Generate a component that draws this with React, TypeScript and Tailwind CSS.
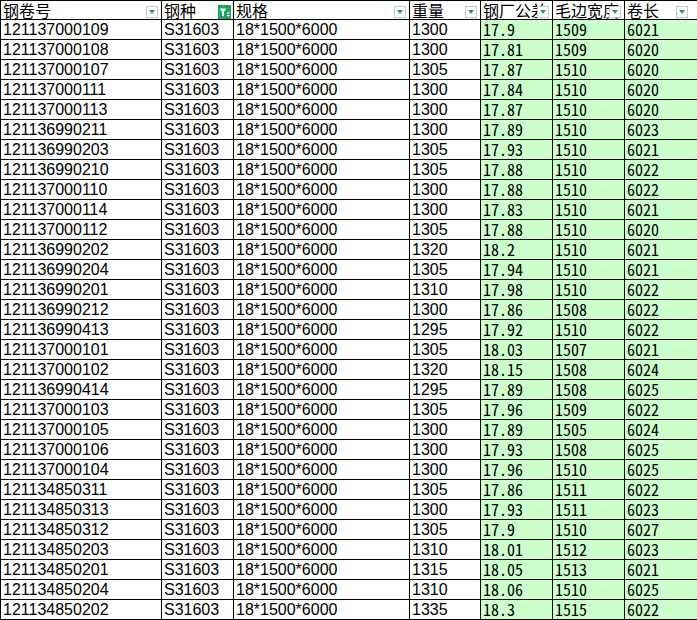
import React from "react";

type Row = [string, string, string, string, string];

const rows: Row[] = [
  ["121137000109", "1300", "17.9", "1509", "6021"],
  ["121137000108", "1300", "17.81", "1509", "6020"],
  ["121137000107", "1305", "17.87", "1510", "6020"],
  ["121137000111", "1300", "17.84", "1510", "6020"],
  ["121137000113", "1300", "17.87", "1510", "6020"],
  ["121136990211", "1300", "17.89", "1510", "6023"],
  ["121136990203", "1305", "17.93", "1510", "6021"],
  ["121136990210", "1305", "17.88", "1510", "6022"],
  ["121137000110", "1300", "17.88", "1510", "6022"],
  ["121137000114", "1300", "17.83", "1510", "6021"],
  ["121137000112", "1305", "17.88", "1510", "6020"],
  ["121136990202", "1320", "18.2", "1510", "6021"],
  ["121136990204", "1305", "17.94", "1510", "6021"],
  ["121136990201", "1310", "17.98", "1510", "6022"],
  ["121136990212", "1300", "17.86", "1508", "6022"],
  ["121136990413", "1295", "17.92", "1510", "6022"],
  ["121137000101", "1305", "18.03", "1507", "6021"],
  ["121137000102", "1320", "18.15", "1508", "6024"],
  ["121136990414", "1295", "17.89", "1508", "6025"],
  ["121137000103", "1305", "17.96", "1509", "6022"],
  ["121137000105", "1300", "17.89", "1505", "6024"],
  ["121137000106", "1300", "17.93", "1508", "6025"],
  ["121137000104", "1300", "17.96", "1510", "6025"],
  ["121134850311", "1305", "17.86", "1511", "6022"],
  ["121134850313", "1300", "17.93", "1511", "6023"],
  ["121134850312", "1305", "17.9", "1510", "6027"],
  ["121134850203", "1310", "18.01", "1512", "6023"],
  ["121134850201", "1315", "18.05", "1513", "6021"],
  ["121134850204", "1310", "18.06", "1510", "6025"],
  ["121134850202", "1335", "18.3", "1515", "6022"],
];

const gridCols = "grid grid-cols-[161px_72px_176px_71px_72px_72px_73px]";
const sans = "font-['Liberation_Sans',Arial,sans-serif]";
const mono = "font-['Noto_Sans_Mono_CJK_SC','Noto_Sans_Mono_CJK_JP','Liberation_Mono',monospace]";
const cjk = "font-['Noto_Sans_CJK_SC',sans-serif]";

function Dropdown({ className = "right-[3px]" }: { className?: string }) {
  return (
    <span
      className={`absolute bottom-[1px] ${className} flex h-[12px] w-[12px] items-center justify-center border border-[#c8c8c8] bg-white`}
    >
      <span className="h-0 w-0 border-x-[3px] border-t-[4px] border-x-transparent border-t-[#1f9f5f]" />
    </span>
  );
}

function FilterOn() {
  return (
    <span className="absolute bottom-0 right-[2px] flex h-[14px] w-[13px] items-center justify-center bg-[#21a366]">
      <svg width="11" height="11" viewBox="0 0 11 11">
        <path d="M0.5 1.5h7l-2.6 3.2v4.8l-1.8-1V4.7z" fill="#fff" />
        <rect x="8" y="5.5" width="2.5" height="1.2" fill="#fff" />
        <rect x="8" y="8" width="2.5" height="1.2" fill="#fff" />
      </svg>
    </span>
  );
}

function HeadCell({ label, filter, last }: { label: string; filter?: boolean; last?: boolean }) {
  return (
    <div className="relative overflow-hidden whitespace-nowrap border-r border-black bg-white pl-[2px]">
      <span className={`${cjk} block text-[16px] leading-[18px] text-black`}>{label}</span>
      {filter ? <FilterOn /> : <Dropdown className={last ? "right-[9px]" : "right-[3px]"} />}
    </div>
  );
}

function Cell({ children, green }: { children: React.ReactNode; green?: boolean }) {
  return (
    <div
      className={`overflow-hidden whitespace-nowrap border-r border-black pl-[2px] text-[16px] leading-[19px] text-black ${
        green ? `bg-[#ccffcc] ${mono}` : `bg-white ${sans}`
      }`}
    >
      {children}
    </div>
  );
}

export default function App() {
  return (
    <div className="h-[620px] w-[697px] overflow-hidden bg-white">
      <div className="w-[698px] border-l border-t border-black">
        <div className={`${gridCols} h-[19px] border-b border-black`}>
          <HeadCell label="钢卷号" />
          <HeadCell label="钢种" filter />
          <HeadCell label="规格" />
          <HeadCell label="重量" />
          <HeadCell label="钢厂公差" />
          <HeadCell label="毛边宽度" />
          <HeadCell label="卷长" last />
        </div>
        {rows.map((r) => (
          <div key={r[0]} className={`${gridCols} h-[20px] border-b border-black`}>
            <Cell>{r[0]}</Cell>
            <Cell>S31603</Cell>
            <Cell>18*1500*6000</Cell>
            <Cell>{r[1]}</Cell>
            <Cell green>{r[2]}</Cell>
            <Cell green>{r[3]}</Cell>
            <Cell green>{r[4]}</Cell>
          </div>
        ))}
      </div>
    </div>
  );
}
